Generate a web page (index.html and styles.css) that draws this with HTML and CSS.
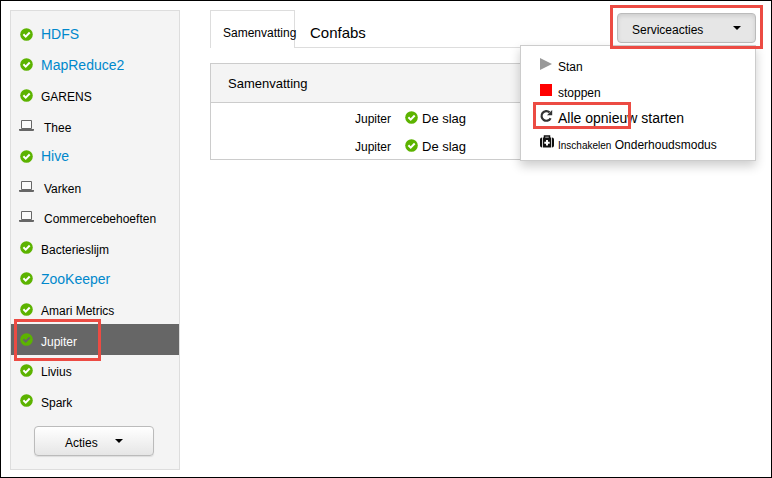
FILE: index.html
```html
<!DOCTYPE html>
<html lang="nl">
<head>
<meta charset="utf-8">
<title>Jupiter</title>
<link rel="stylesheet" href="styles.css">
</head>
<body>
<svg class="defs" aria-hidden="true">
  <symbol id="check" viewBox="0 0 13 13"><circle cx="6.5" cy="6.5" r="6.3" fill="#5cb300"/><path d="M3.4 6.3 5.7 8.6 9.7 4.5" fill="none" stroke="currentColor" stroke-width="2"/></symbol>
  <symbol id="laptop" viewBox="0 0 16 12"><path d="M2.5 .5h10v8h-10z" fill="#fafafa" stroke="#666"/><path d="M0 9h15v1q0 1-1 1H1q-1 0-1-1z" fill="#666"/></symbol>
</svg>
<aside class="sidebar">
  <nav class="services">
    <a class="service main" href="#"><svg class="check"><use href="#check"/></svg><span>HDFS</span></a>
    <a class="service main" href="#"><svg class="check"><use href="#check"/></svg><span>MapReduce2</span></a>
    <a class="service" href="#"><svg class="check"><use href="#check"/></svg><span>GARENS</span></a>
    <a class="service client" href="#"><svg class="laptop"><use href="#laptop"/></svg><span>Thee</span></a>
    <a class="service main" href="#"><svg class="check"><use href="#check"/></svg><span>Hive</span></a>
    <a class="service client" href="#"><svg class="laptop"><use href="#laptop"/></svg><span>Varken</span></a>
    <a class="service client" href="#"><svg class="laptop"><use href="#laptop"/></svg><span>Commercebehoeften</span></a>
    <a class="service" href="#"><svg class="check"><use href="#check"/></svg><span>Bacterieslijm</span></a>
    <a class="service main" href="#"><svg class="check"><use href="#check"/></svg><span>ZooKeeper</span></a>
    <a class="service" href="#"><svg class="check"><use href="#check"/></svg><span>Amari Metrics</span></a>
    <a class="service selected" href="#" aria-current="page"><svg class="check"><use href="#check"/></svg><span>Jupiter</span></a>
    <a class="service" href="#"><svg class="check"><use href="#check"/></svg><span>Livius</span></a>
    <a class="service" href="#"><svg class="check"><use href="#check"/></svg><span>Spark</span></a>
  </nav>
  <button class="button actions" type="button"><span>Acties</span><i class="caret"></i></button>
</aside>
<main class="content">
  <header class="tabs">
    <a class="tab active" href="#">Samenvatting</a>
    <a class="tab" href="#">Confabs</a>
    <div class="service-actions">
      <button class="button open" type="button" aria-expanded="true"><span>Serviceacties</span><i class="caret"></i></button>
      <div class="menu">
        <button class="entry" type="button"><svg class="glyph" viewBox="0 0 14 14"><path d="M0 1 12 7 0 13z" fill="#999"/></svg><span>Stan</span></button>
        <button class="entry" type="button"><svg class="glyph" viewBox="0 0 14 14"><path d="M0 1h12v12H0z" fill="red"/></svg><span>stoppen</span></button>
        <button class="entry restart" type="button"><svg class="glyph" viewBox="0 0 14 14"><path d="M10.6 9.2A4.8 4.8 0 1 1 9.6 3.4" fill="none" stroke="#333" stroke-width="2.2"/><path d="M12.2 1v5.2H7z" fill="#333"/></svg><span>Alle opnieuw starten</span></button>
        <button class="entry" type="button"><svg class="glyph" viewBox="0 0 14 14"><path d="M4.5 3V1h5v2" fill="none" stroke="#111" stroke-width="1.5"/><path d="M3 2.5h8v10H3zM2.2 2.5v10H2q-2 0-2-2v-6q0-2 2-2zM11.8 2.5v10h.2q2 0 2-2v-6q0-2-2-2z" fill="#111"/><path d="M7 5v5.4M4.3 7.7h5.4" stroke="#fff" stroke-width="2"/></svg><span><small>Inschakelen</small> Onderhoudsmodus</span></button>
      </div>
    </div>
  </header>
  <section class="panel">
    <h2>Samenvatting</h2>
    <dl>
      <div class="row"><dt>Jupiter</dt><dd><svg class="check"><use href="#check"/></svg><span>De slag</span></dd></div>
      <div class="row"><dt>Jupiter</dt><dd><svg class="check"><use href="#check"/></svg><span>De slag</span></dd></div>
    </dl>
  </section>
</main>
</body>
</html>
```
FILE: styles.css
```css
* { box-sizing: border-box; }
body {
  margin: 0;
  min-height: 100vh;
  display: flex;
  gap: 30px;
  padding: 9px 15px 7px 9px;
  border: 1px solid #000;
  background: #fff;
  color: #000;
  font: 12px/16px "Liberation Sans", Arial, sans-serif;
}
a { color: inherit; text-decoration: none; }
button { font: inherit; color: inherit; }
svg { flex: none; display: block; }
.defs { position: absolute; width: 0; height: 0; }
.check { width: 13px; height: 13px; color: #fff; }
.laptop { width: 16px; height: 12px; }

.sidebar {
  flex: 0 0 170px;
  display: flex;
  flex-direction: column;
  padding: 8px 0 13px;
  border: 1px solid #ddd;
  background: #f4f4f4;
}
.services { flex: 1; display: flex; flex-direction: column; }
.service {
  flex: 1;
  display: flex;
  align-items: center;
  gap: 8px;
  padding-left: 9px;
}
.service span { padding-top: 4px; }
.client { padding-left: 8px; gap: 9px; }
.main { font-size: 14px; color: #0088cc; }
.main span { padding-top: 0; }
.selected { position: relative; background: #666; color: #fff; }
.selected .check { color: #666; }
.selected::after,
.service-actions::after,
.restart::after {
  content: "";
  position: absolute;
  border: 3px solid #ec4b43;
  pointer-events: none;
}
.selected::after { inset: -5px 78px -6px 3px; }

.button {
  display: flex;
  align-items: center;
  height: 30px;
  border: 1px solid #bbb;
  border-radius: 4px;
  background: linear-gradient(#fff, #e6e6e6);
  box-shadow: 0 1px 1px #ddd;
}
.button span { padding-top: 4px; }
.caret {
  border: solid transparent;
  border-width: 4px 4px 0;
  border-top-color: #000;
}
.actions { width: 120px; margin: 10px 0 0 23px; padding: 0 30px; gap: 17px; }
.open {
  width: 139px;
  justify-content: space-between;
  padding: 0 14px;
  background: #e6e6e6;
  box-shadow: inset 0 2px 4px #ccc;
}

.content { flex: 1; min-width: 0; }
.tabs {
  position: relative;
  display: flex;
  height: 38px;
  border-bottom: 1px solid #ddd;
}
.tab { padding: 15px 15px 0; font-size: 15px; }
.active {
  width: 85px;
  height: 38px;
  padding: 14px 12px 0;
  border: 1px solid #ddd;
  border-bottom: 0;
  background: #fff;
  font-size: 12px;
}
.service-actions { position: relative; margin: 3px 0 auto auto; }
.service-actions::after { inset: -8px -7px -6px; }
.menu {
  position: absolute;
  top: 32px;
  right: 0;
  width: 236px;
  padding: 5px 0;
  border: 1px solid #ccc;
  background: #fff;
  box-shadow: 0 5px 10px rgba(0, 0, 0, 0.2);
}
.entry {
  display: flex;
  align-items: center;
  gap: 4px;
  width: 100%;
  height: 26px;
  padding: 0 0 0 19px;
  border: 0;
  background: none;
  text-align: left;
  white-space: nowrap;
}
.entry span { padding-top: 6px; }
.entry small { font-size: 10px; }
.glyph { width: 14px; height: 14px; }
.restart { position: relative; font-size: 14px; }
.restart span { padding-top: 4px; }
.restart::after { inset: -1px 124px 0 12px; }

.panel { margin-top: 15px; border: 1px solid #ccc; }
h2 {
  margin: 0;
  padding: 12px 17px 10px;
  border-bottom: 1px solid #ccc;
  background: #f4f4f4;
  font-size: 13px;
  font-weight: normal;
}
dl { margin: 0; }
.row {
  display: grid;
  grid-template-columns: 180px 1fr;
  gap: 14px;
  align-items: center;
  height: 28px;
}
dt { text-align: right; padding-top: 4px; }
dd { display: flex; align-items: center; gap: 4px; margin: 0; font-size: 13px; }
dd span { padding-top: 4px; }
```
